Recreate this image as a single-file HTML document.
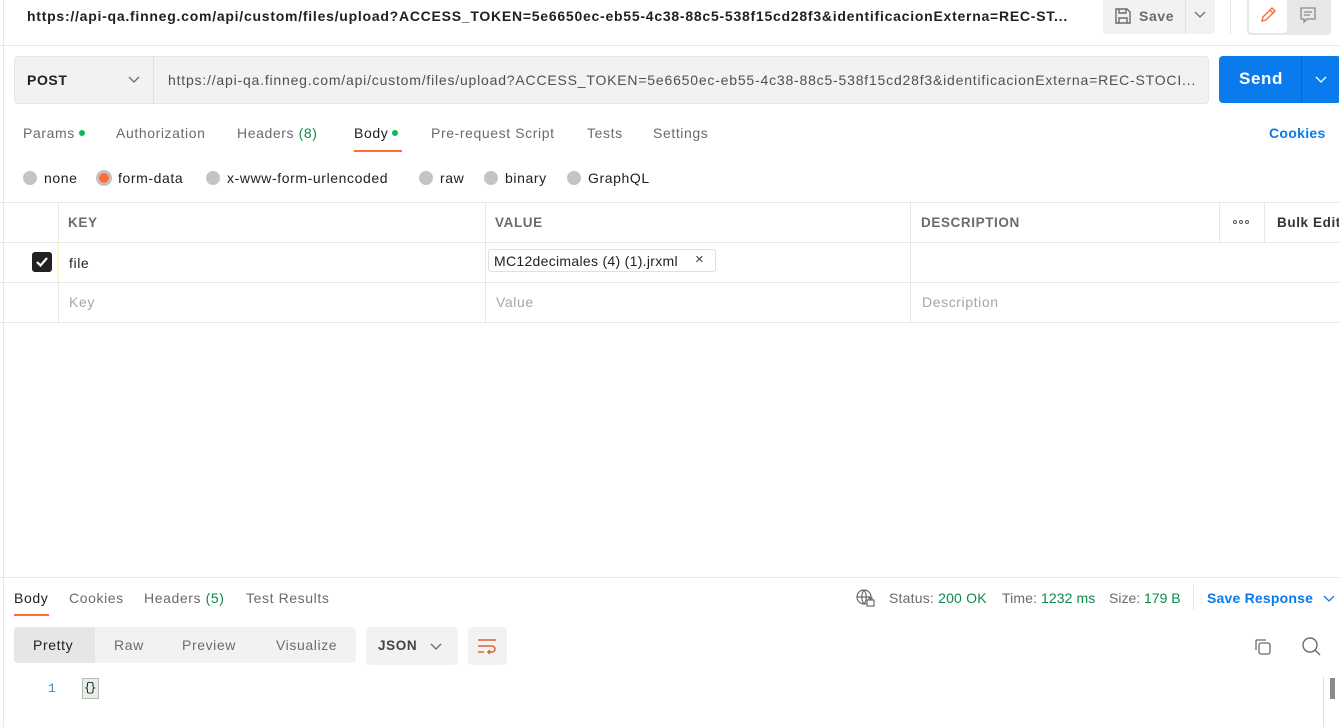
<!DOCTYPE html>
<html><head><style>
*{box-sizing:border-box;margin:0;padding:0}
body{width:1339px;height:727px;overflow:hidden;background:#fff;font-family:"Liberation Sans",sans-serif;font-size:14px;color:#212121;position:relative;letter-spacing:0.6px}
.a{position:absolute;white-space:nowrap}
.g{color:#6b6b6b}
.dot{display:inline-block;width:6px;height:6px;border-radius:50%;background:#0cbb52;margin-left:4px;vertical-align:2px}
.rad{display:inline-block;width:14px;height:14px;border-radius:50%;background:#c4c4c4;vertical-align:-2px;margin-right:7px}
.line{position:absolute;background:#e6e6e6}
</style></head><body>
<div class="line" style="left:3px;top:0;width:1px;height:727px"></div>
<div class="a" style="left:27px;top:8px;font-weight:bold;font-size:14px;letter-spacing:0.75px">https://api-qa.finneg.com/api/custom/files/upload?ACCESS_TOKEN=5e6650ec-eb55-4c38-88c5-538f15cd28f3&amp;identificacionExterna=REC-ST...</div>
<div class="a" style="left:1103px;top:0;width:112px;height:34px;background:#f2f2f2;border-radius:0 0 4px 4px"></div>
<div class="a" style="left:1185px;top:0;width:1px;height:34px;background:#e0e0e0"></div>
<svg class="a" style="left:1114px;top:7px" width="18" height="18" viewBox="0 0 18 18" fill="none" stroke="#6b6b6b" stroke-width="1.4"><path d="M2 2h11l3 3v11H2z M5 2v4h7V2 M5 16v-5h8v5"/></svg>
<div class="a" style="left:1139px;top:8px;font-weight:bold;color:#6b6b6b">Save</div>
<svg class="a" style="left:1194px;top:11px" width="12" height="8"><path d="M1 1l5 5 5-5" fill="none" stroke="#6b6b6b" stroke-width="1.3"/></svg>
<div class="a" style="left:1230px;top:0;width:1px;height:34px;background:#e6e6e6"></div>
<div class="a" style="left:1247px;top:0;width:84px;height:35px;background:#e8e8e8;border-radius:0 0 4px 4px"></div>
<div class="a" style="left:1249px;top:0;width:38px;height:33px;background:#fff;border-radius:0 0 4px 4px"></div>
<svg class="a" style="left:1259px;top:6px" width="18" height="18" viewBox="0 0 18 18" fill="none" stroke="#ff6c37" stroke-width="1.4"><path d="M3 15l1-4 9-9 3 3-9 9z M11 4l3 3"/></svg>
<svg class="a" style="left:1299px;top:6px" width="18" height="18" viewBox="0 0 18 18" fill="none" stroke="#8a8a8a" stroke-width="1.3"><path d="M2 2h14v11H8l-3 3v-3H2z M5 6h8 M5 9h6"/></svg>
<div class="line" style="left:0;top:45px;width:1339px;height:1px"></div>
<div class="a" style="left:14px;top:56px;width:1195px;height:48px;background:#f2f2f2;border:1px solid #e6e6e6;border-radius:4px"></div>
<div class="a" style="left:153px;top:56px;width:1px;height:48px;background:#e0e0e0"></div>
<div class="a" style="left:27px;top:72px;font-weight:bold">POST</div>
<svg class="a" style="left:128px;top:76px" width="12" height="8"><path d="M1 1l5 5 5-5" fill="none" stroke="#6b6b6b" stroke-width="1.3"/></svg>
<div class="a" style="left:168px;top:72px;color:#505050;font-size:14px;letter-spacing:0.8px">https://api-qa.finneg.com/api/custom/files/upload?ACCESS_TOKEN=5e6650ec-eb55-4c38-88c5-538f15cd28f3&amp;identificacionExterna=REC-STOCI...</div>
<div class="a" style="left:1219px;top:56px;width:122px;height:47px;background:#097bed;border-radius:4px"></div>
<div class="a" style="left:1301px;top:56px;width:1px;height:47px;background:#0665c4"></div>
<div class="a" style="left:1239px;top:69px;color:#fff;font-weight:bold;font-size:17px">Send</div>
<svg class="a" style="left:1315px;top:76px" width="12" height="8"><path d="M1 1l5 5 5-5" fill="none" stroke="#fff" stroke-width="1.3"/></svg>
<div class="a g" style="left:23px;top:125px">Params<span class="dot"></span></div>
<div class="a g" style="left:116px;top:125px">Authorization</div>
<div class="a g" style="left:237px;top:125px">Headers <span style="color:#0a8a4a">(8)</span></div>
<div class="a" style="left:354px;top:125px">Body<span class="dot"></span></div>
<div class="a" style="left:354px;top:150px;width:48px;height:2px;background:#ff6c37"></div>
<div class="a g" style="left:431px;top:125px">Pre-request Script</div>
<div class="a g" style="left:587px;top:125px">Tests</div>
<div class="a g" style="left:653px;top:125px">Settings</div>
<div class="a" style="left:1269px;top:125px;color:#097bed;font-weight:bold;letter-spacing:0.3px">Cookies</div>
<div class="a" style="left:23px;top:170px"><span class="rad"></span>none</div>
<div class="a" style="left:97px;top:170px"><span class="rad" style="background:#ff6c37;box-shadow:0 0 0 2px #c4c4c4 inset, 0 0 0 1px #c4c4c4"></span>form-data</div>
<div class="a" style="left:206px;top:170px"><span class="rad"></span>x-www-form-urlencoded</div>
<div class="a" style="left:419px;top:170px"><span class="rad"></span>raw</div>
<div class="a" style="left:484px;top:170px"><span class="rad"></span>binary</div>
<div class="a" style="left:567px;top:170px"><span class="rad"></span>GraphQL</div>
<div class="line" style="left:0;top:202px;width:1339px;height:1px"></div>
<div class="line" style="left:0;top:242px;width:1339px;height:1px"></div>
<div class="line" style="left:0;top:282px;width:1339px;height:1px"></div>
<div class="line" style="left:0;top:322px;width:1339px;height:1px"></div>
<div class="line" style="left:58px;top:202px;width:1px;height:120px"></div>
<div class="line" style="left:485px;top:202px;width:1px;height:120px"></div>
<div class="line" style="left:910px;top:202px;width:1px;height:120px"></div>
<div class="line" style="left:1219px;top:202px;width:1px;height:40px"></div>
<div class="line" style="left:1264px;top:202px;width:1px;height:40px"></div>
<div class="a" style="left:57px;top:243px;width:2px;height:38px;background:#fff3c8"></div>
<div class="a g" style="left:68px;top:215px;font-weight:bold;font-size:13.5px">KEY</div>
<div class="a g" style="left:495px;top:215px;font-weight:bold;font-size:13.5px">VALUE</div>
<div class="a g" style="left:921px;top:215px;font-weight:bold;font-size:13.5px">DESCRIPTION</div>
<div class="a" style="left:1233px;top:220px;width:18px;height:6px;font-size:0"><span style="display:inline-block;width:4px;height:4px;border:1.3px solid #555;border-radius:50%;margin-right:2px"></span><span style="display:inline-block;width:4px;height:4px;border:1.3px solid #555;border-radius:50%;margin-right:2px"></span><span style="display:inline-block;width:4px;height:4px;border:1.3px solid #555;border-radius:50%"></span></div>
<div class="a" style="left:1277px;top:215px;font-weight:bold;font-size:13.5px;color:#333">Bulk Edit</div>
<div class="a" style="left:32px;top:252px;width:20px;height:20px;background:#212121;border-radius:3px"></div>
<svg class="a" style="left:35px;top:255px" width="14" height="14"><path d="M2 7l3.5 3.5L12 3" fill="none" stroke="#fff" stroke-width="2.2"/></svg>
<div class="a" style="left:69px;top:255px">file</div>
<div class="a" style="left:488px;top:249px;width:228px;height:23px;border:1px solid #e0e0e0;border-radius:3px"></div>
<div class="a" style="left:494px;top:253px;letter-spacing:0.3px">MC12decimales (4) (1).jrxml</div>
<div class="a" style="left:695px;top:251px;font-size:15px;color:#444">×</div>
<div class="a" style="left:69px;top:294px;color:#a6a6a6">Key</div>
<div class="a" style="left:496px;top:294px;color:#a6a6a6">Value</div>
<div class="a" style="left:922px;top:294px;color:#a6a6a6">Description</div>
<div class="line" style="left:0;top:577px;width:1339px;height:1px"></div>
<div class="a" style="left:14px;top:590px">Body</div>
<div class="a" style="left:14px;top:614px;width:35px;height:2px;background:#ff6c37"></div>
<div class="a g" style="left:69px;top:590px">Cookies</div>
<div class="a g" style="left:144px;top:590px">Headers <span style="color:#0a8a4a">(5)</span></div>
<div class="a g" style="left:246px;top:590px">Test Results</div>
<svg class="a" style="left:855px;top:588px" width="20" height="20" viewBox="0 0 20 20" fill="none" stroke="#6b6b6b" stroke-width="1.2"><circle cx="9" cy="9" r="7"/><path d="M2 9h14 M9 2c-3 4-3 10 0 14 M9 2c3 4 3 10 0 14"/><rect x="12" y="12" width="7" height="6" fill="#fff"/><path d="M14 12v-2h3v2"/></svg>
<div class="a g" style="left:889px;top:590px;letter-spacing:0.2px">Status: <span style="color:#0a8a4a">200 OK</span></div>
<div class="a g" style="left:1002px;top:590px;letter-spacing:0.1px">Time: <span style="color:#0a8a4a">1232 ms</span></div>
<div class="a g" style="left:1109px;top:590px;letter-spacing:0px">Size: <span style="color:#0a8a4a">179 B</span></div>
<div class="line" style="left:1193px;top:585px;width:1px;height:25px"></div>
<div class="a" style="left:1207px;top:590px;color:#097bed;font-weight:bold;letter-spacing:0.2px">Save Response</div>
<svg class="a" style="left:1323px;top:595px" width="12" height="8"><path d="M1 1l5 5 5-5" fill="none" stroke="#097bed" stroke-width="1.3"/></svg>
<div class="a" style="left:14px;top:627px;width:342px;height:36px;background:#f2f2f2;border-radius:4px"></div>
<div class="a" style="left:14px;top:627px;width:81px;height:36px;background:#e6e6e6;border-radius:4px 0 0 4px"></div>
<div class="a" style="left:33px;top:637px">Pretty</div>
<div class="a g" style="left:114px;top:637px">Raw</div>
<div class="a g" style="left:182px;top:637px">Preview</div>
<div class="a g" style="left:276px;top:637px">Visualize</div>
<div class="a" style="left:366px;top:627px;width:92px;height:38px;background:#f2f2f2;border-radius:4px"></div>
<div class="a" style="left:378px;top:638px;font-weight:bold;font-size:13.5px;color:#444">JSON</div>
<svg class="a" style="left:430px;top:643px" width="12" height="8"><path d="M1 1l5 5 5-5" fill="none" stroke="#6b6b6b" stroke-width="1.3"/></svg>
<div class="a" style="left:468px;top:627px;width:39px;height:38px;background:#f2f2f2;border-radius:4px"></div>
<svg class="a" style="left:477px;top:637px" width="20" height="18" fill="none" stroke="#e0603a" stroke-width="1.5"><path d="M1 3h18 M1 9h14a3 3 0 010 6h-4 M13 13l-2 2 2 2 M1 15h6"/></svg>
<svg class="a" style="left:1253px;top:637px" width="20" height="20" fill="none" stroke="#6b6b6b" stroke-width="1.3"><rect x="6" y="6" width="11" height="11" rx="2"/><path d="M3 13V4a1 1 0 011-1h9"/></svg>
<svg class="a" style="left:1301px;top:636px" width="22" height="22" fill="none" stroke="#6b6b6b" stroke-width="1.4"><circle cx="9" cy="9" r="7"/><path d="M14 14l5 5"/></svg>
<div class="a" style="left:48px;top:681px;color:#3a8ab8;font-family:'Liberation Mono',monospace;font-size:13px;letter-spacing:0">1</div>
<div class="a" style="left:82px;top:678px;width:17px;height:21px;background:#e6f0e6;border:1px solid #b8b8b8;font-family:'Liberation Mono',monospace;font-size:12px;line-height:19px;letter-spacing:-2px;padding-left:1px">{}</div>
<div class="a" style="left:1323px;top:677px;width:1px;height:50px;background:#e0e0e0"></div>
<div class="a" style="left:1330px;top:678px;width:5px;height:21px;background:#8a8a8a"></div>
</body></html>
